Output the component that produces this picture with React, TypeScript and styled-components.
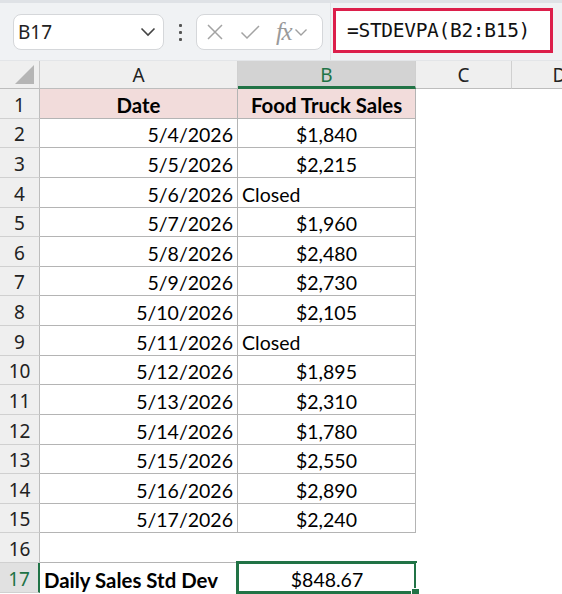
import React from "react";
import styled, { createGlobalStyle, css } from "styled-components";

const Global = createGlobalStyle`
  html, body { margin: 0; padding: 0; background: #ffffff; }
  body { width: 562px; height: 594px; overflow: hidden; }
`;

const CELL_FONT = `"Lato", "Liberation Sans", sans-serif`;
const UI_FONT = `"Noto Sans", "Open Sans", sans-serif`;
const GREEN = "#217346";

const Page = styled.div`
  width: 562px;
  height: 594px;
  overflow: hidden;
  display: flex;
  flex-direction: column;
  background: #ffffff;
`;

const Toolbar = styled.div`
  height: 61px;
  box-sizing: border-box;
  flex: none;
  display: flex;
  align-items: center;
  background: #f0f2f4;
  border-top: 3px solid #dfe2e6;
  border-bottom: 1px solid #e3e5e8;
  padding-left: 13px;
`;

const NameBox = styled.div`
  width: 151px;
  height: 36px;
  box-sizing: border-box;
  background: #ffffff;
  border: 1px solid #d5d7da;
  border-radius: 8px;
  display: flex;
  align-items: center;
  justify-content: space-between;
  padding: 0 7px 0 4px;
  font-family: ${UI_FONT};
  font-size: 19px;
  color: #222;
  margin-top: 1px;
`;

const Dots = styled.div`
  width: 32px;
  display: flex;
  flex-direction: column;
  align-items: center;
  gap: 4px;
  margin-top: 1px;
`;

const Dot = styled.span`
  width: 3px;
  height: 3px;
  background: #555;
  border-radius: 1px;
`;

const FxBox = styled.div`
  width: 127px;
  height: 36px;
  box-sizing: border-box;
  background: #ffffff;
  border: 1px solid #d5d7da;
  border-radius: 8px;
  display: flex;
  align-items: center;
  padding-left: 9px;
  margin-top: 1px;
`;

const Fx = styled.span`
  font-family: "Liberation Serif", serif;
  font-style: italic;
  font-size: 25px;
  line-height: 1;
  color: #9a9a9a;
  margin: 0 3px 2px 16px;
  letter-spacing: -1.5px;
`;

const Divider = styled.div`
  width: 1px;
  align-self: stretch;
  background: #e1e3e6;
  margin-left: 7px;
  margin-top: -3px;
`;

const FormulaWrap = styled.div`
  flex: 1;
  align-self: stretch;
  display: flex;
  align-items: center;
  padding: 4px 9px 5px 2px;
  margin-top: -1px;
`;

const Formula = styled.div`
  width: 220px;
  height: 45px;
  box-sizing: border-box;
  border: 3px solid #dc1f4b;
  background: #ffffff;
  display: flex;
  align-items: center;
  padding-left: 11px;
  font-family: "DejaVu Sans Mono", "Liberation Mono", monospace;
  font-size: 19.5px;
  letter-spacing: -0.3px;
  color: #111;
`;

const Sheet = styled.div<{ $rows: string }>`
  display: grid;
  grid-template-columns: 40px 198px 178px 96px 96px;
  grid-template-rows: 28px ${(p) => p.$rows};
  font-family: ${CELL_FONT};
  font-size: 19.5px;
  color: #000;
`;

const Corner = styled.div`
  background: #efefef;
  border-right: 1px solid #c8c8c8;
  border-bottom: 1px solid #bdbdbd;
  display: flex;
  align-items: flex-end;
  justify-content: flex-end;
  padding: 0 5px 4px 0;
`;

const ColHead = styled.div<{ $active?: boolean }>`
  background: ${(p) => (p.$active ? "#d3d3d3" : "#efefef")};
  border-right: 1px solid #d0d0d0;
  border-bottom: ${(p) => (p.$active ? `3px solid ${GREEN}` : "1px solid #bdbdbd")};
  color: ${(p) => (p.$active ? GREEN : "#222")};
  display: flex;
  align-items: center;
  justify-content: center;
  font-family: ${UI_FONT};
  font-size: 19px;
  padding-top: ${(p) => (p.$active ? "2px" : "0")};
`;

const RowHead = styled.div<{ $active?: boolean }>`
  background: ${(p) => (p.$active ? "#e1e1e1" : "#efefef")};
  border-bottom: 1px solid #d0d0d0;
  border-right: ${(p) => (p.$active ? `2px solid ${GREEN}` : "1px solid #bdbdbd")};
  color: ${(p) => (p.$active ? GREEN : "#222")};
  display: flex;
  align-items: center;
  justify-content: center;
  font-family: ${UI_FONT};
  font-size: 19px;
  padding-top: 2px;
  box-sizing: border-box;
`;

type Align = "left" | "right" | "center";

const Cell = styled.div<{
  $align?: Align;
  $bold?: boolean;
  $fill?: string;
  $box?: boolean;
  $under?: boolean;
  $selected?: boolean;
}>`
  position: relative;
  box-sizing: border-box;
  display: flex;
  align-items: center;
  padding: 3px 4px 0 4px;
  white-space: nowrap;
  justify-content: ${(p) =>
    p.$align === "right" ? "flex-end" : p.$align === "center" ? "center" : "flex-start"};
  font-weight: ${(p) => (p.$bold ? 700 : 400)};
  font-size: ${(p) => (p.$bold ? "20.4px" : "19.5px")};
  background: ${(p) => p.$fill || "#ffffff"};
  ${(p) =>
    p.$box &&
    css`
      border-right: 1px solid #b4b4b4;
      border-bottom: 1px solid #b4b4b4;
    `}
  ${(p) =>
    p.$under &&
    css`
      border-bottom: 1px solid #b4b4b4;
    `}
  ${(p) =>
    p.$selected &&
    css`
      &::after {
        content: "";
        position: absolute;
        left: -2px;
        top: -2px;
        right: -1px;
        bottom: -1px;
        border: 3px solid ${GREEN};
        pointer-events: none;
      }
      &::before {
        content: "";
        position: absolute;
        right: -4px;
        bottom: -4px;
        width: 7px;
        height: 7px;
        background: ${GREEN};
        border: 1px solid #fff;
        z-index: 2;
      }
    `}
`;

const Chevron = () => (
  <svg width="16" height="10" viewBox="0 0 16 10">
    <path d="M1.5 1.5 L8 8 L14.5 1.5" fill="none" stroke="#444" strokeWidth="1.6" />
  </svg>
);

const SmallChevron = () => (
  <svg width="14" height="9" viewBox="0 0 14 9">
    <path d="M1.5 1.5 L7 7 L12.5 1.5" fill="none" stroke="#a0a0a0" strokeWidth="1.4" />
  </svg>
);

const Cross = () => (
  <svg width="18" height="18" viewBox="0 0 18 18" style={{ marginRight: 16 }}>
    <path d="M2 2 L16 16 M16 2 L2 16" fill="none" stroke="#a3a3a3" strokeWidth="1.5" />
  </svg>
);

const Check = () => (
  <svg width="20" height="16" viewBox="0 0 20 16">
    <path d="M1.5 8.5 L7 14 L19 2" fill="none" stroke="#a3a3a3" strokeWidth="1.5" />
  </svg>
);

const Triangle = () => (
  <svg width="19" height="19" viewBox="0 0 19 19">
    <path d="M19 0 L19 19 L0 19 Z" fill="#b5b5b5" />
  </svg>
);

type Row = { a: string; b: string; bAlign: Align };

const data: Row[] = [
  { a: "5/4/2026", b: "$1,840", bAlign: "center" },
  { a: "5/5/2026", b: "$2,215", bAlign: "center" },
  { a: "5/6/2026", b: "Closed", bAlign: "left" },
  { a: "5/7/2026", b: "$1,960", bAlign: "center" },
  { a: "5/8/2026", b: "$2,480", bAlign: "center" },
  { a: "5/9/2026", b: "$2,730", bAlign: "center" },
  { a: "5/10/2026", b: "$2,105", bAlign: "center" },
  { a: "5/11/2026", b: "Closed", bAlign: "left" },
  { a: "5/12/2026", b: "$1,895", bAlign: "center" },
  { a: "5/13/2026", b: "$2,310", bAlign: "center" },
  { a: "5/14/2026", b: "$1,780", bAlign: "center" },
  { a: "5/15/2026", b: "$2,550", bAlign: "center" },
  { a: "5/16/2026", b: "$2,890", bAlign: "center" },
  { a: "5/17/2026", b: "$2,240", bAlign: "center" },
];

const ROW_H = 29.625;
const rowHeights = Array.from({ length: 17 }, (_, i) =>
  Math.round((i + 1) * ROW_H) - Math.round(i * ROW_H)
);

export default function App() {
  return (
    <>
      <Global />
      <Page>
        <Toolbar>
          <NameBox>
            <span>B17</span>
            <Chevron />
          </NameBox>
          <Dots>
            <Dot />
            <Dot />
            <Dot />
          </Dots>
          <FxBox>
            <Cross />
            <Check />
            <Fx>fx</Fx>
            <SmallChevron />
          </FxBox>
          <Divider />
          <FormulaWrap>
            <Formula>=STDEVPA(B2:B15)</Formula>
          </FormulaWrap>
        </Toolbar>
        <Sheet $rows={rowHeights.map((h) => `${h}px`).join(" ")}>
          <Corner>
            <Triangle />
          </Corner>
          <ColHead>A</ColHead>
          <ColHead $active>B</ColHead>
          <ColHead>C</ColHead>
          <ColHead>D</ColHead>

          <RowHead>1</RowHead>
          <Cell $box $bold $align="center" $fill="#f2dcdb">Date</Cell>
          <Cell $box $bold $align="center" $fill="#f2dcdb">Food Truck Sales</Cell>
          <Cell />
          <Cell />

          {data.map((r, i) => (
            <React.Fragment key={r.a}>
              <RowHead>{i + 2}</RowHead>
              <Cell $box $align="right">{r.a}</Cell>
              <Cell $box $align={r.bAlign}>{r.b}</Cell>
              <Cell />
              <Cell />
            </React.Fragment>
          ))}

          <RowHead>16</RowHead>
          <Cell $under />
          <Cell $under />
          <Cell />
          <Cell />

          <RowHead $active>17</RowHead>
          <Cell $bold $align="left">Daily Sales Std Dev</Cell>
          <Cell $selected $align="center">$848.67</Cell>
          <Cell />
          <Cell />
        </Sheet>
      </Page>
    </>
  );
}
